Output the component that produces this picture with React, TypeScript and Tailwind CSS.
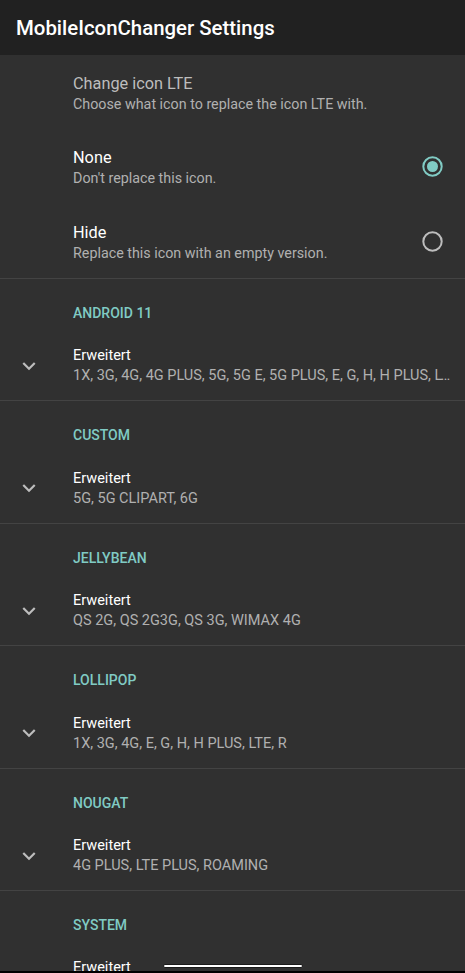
import React from "react";

const font = { fontFamily: "Roboto, 'Noto Sans', sans-serif" };

function Radio({ checked }: { checked: boolean }) {
  return (
    <svg width="21" height="21" viewBox="0 0 21 21" className="shrink-0">
      <circle cx="10.5" cy="10.5" r="9.2" fill="none" stroke={checked ? "#80cbc4" : "#bdbdbd"} strokeWidth="2" />
      {checked && <circle cx="10.5" cy="10.5" r="5.5" fill="#80cbc4" />}
    </svg>
  );
}

function Chevron() {
  return (
    <svg width="26" height="26" viewBox="0 0 24 24" className="shrink-0 ml-[15.5px]">
      <path d="M16.59 8.59L12 13.17 7.41 8.59 6 10l6 6 6-6z" fill="#bdbdbd" />
    </svg>
  );
}

const sections = [
  { title: "ANDROID 11", summary: "1X, 3G, 4G, 4G PLUS, 5G, 5G E, 5G PLUS, E, G, H, H PLUS, LTE, LTE PLUS, ROAMING" },
  { title: "CUSTOM", summary: "5G, 5G CLIPART, 6G" },
  { title: "JELLYBEAN", summary: "QS 2G, QS 2G3G, QS 3G, WIMAX 4G" },
  { title: "LOLLIPOP", summary: "1X, 3G, 4G, E, G, H, H PLUS, LTE, R" },
  { title: "NOUGAT", summary: "4G PLUS, LTE PLUS, ROAMING" },
  { title: "SYSTEM", summary: "1X, 3G, 4G, E, G, H, LTE" },
];

export default function App() {
  return (
    <div className="relative h-[973px] w-full overflow-hidden bg-[#303030]" style={font}>
      <div className="flex h-[55px] items-center bg-[#212121] pl-4">
        <span className="text-[20.4px] font-medium leading-[28px] text-white">MobileIconChanger Settings</span>
      </div>

      <div className="flex flex-col gap-[33.4px] pb-[14.2px] pt-[19px]">
        <div className="flex flex-col pl-[73px]">
          <span className="text-[16.3px] leading-[20px] text-[#bdbdbd]">Change icon LTE</span>
          <span className="text-[14.3px] leading-[21px] text-[#b0b0b0]">Choose what icon to replace the icon LTE with.</span>
        </div>
        <div className="flex items-start pl-[73px] pr-[22px]">
          <div className="flex flex-1 flex-col">
            <span className="text-[16.3px] leading-[20px] text-white">None</span>
            <span className="text-[14.3px] leading-[21px] text-[#b0b0b0]">Don't replace this icon.</span>
          </div>
          <div className="mt-[8px]">
            <Radio checked />
          </div>
        </div>
        <div className="flex items-start pl-[73px] pr-[22px]">
          <div className="flex flex-1 flex-col">
            <span className="text-[16.3px] leading-[20px] text-white">Hide</span>
            <span className="text-[14.3px] leading-[21px] text-[#b0b0b0]">Replace this icon with an empty version.</span>
          </div>
          <div className="mt-[8px]">
            <Radio checked={false} />
          </div>
        </div>
      </div>

      {sections.map((s) => (
        <div key={s.title} className="h-[122.4px] border-t border-[#434343]">
          <div className="pl-[73px] pt-[26px]">
            <span className="block text-[14px] font-medium leading-[16px] text-[#80cbc4]">{s.title}</span>
          </div>
          <div className="mt-[25.5px] flex items-center pr-[14px]">
            <Chevron />
            <div className="ml-[31.5px] flex min-w-0 flex-1 flex-col">
              <span className="text-[14.5px] leading-[20px] text-white">Erweitert</span>
              <span className="truncate text-[14.5px] leading-[19px] text-[#b0b0b0]">{s.summary}</span>
            </div>
          </div>
        </div>
      ))}

      <div className="absolute bottom-[5px] left-[163px] h-[4px] w-[140px] rounded-full border border-[#1a1a1a] bg-white" />
      <div className="absolute bottom-0 left-0 h-[2px] w-full bg-black" />
    </div>
  );
}
